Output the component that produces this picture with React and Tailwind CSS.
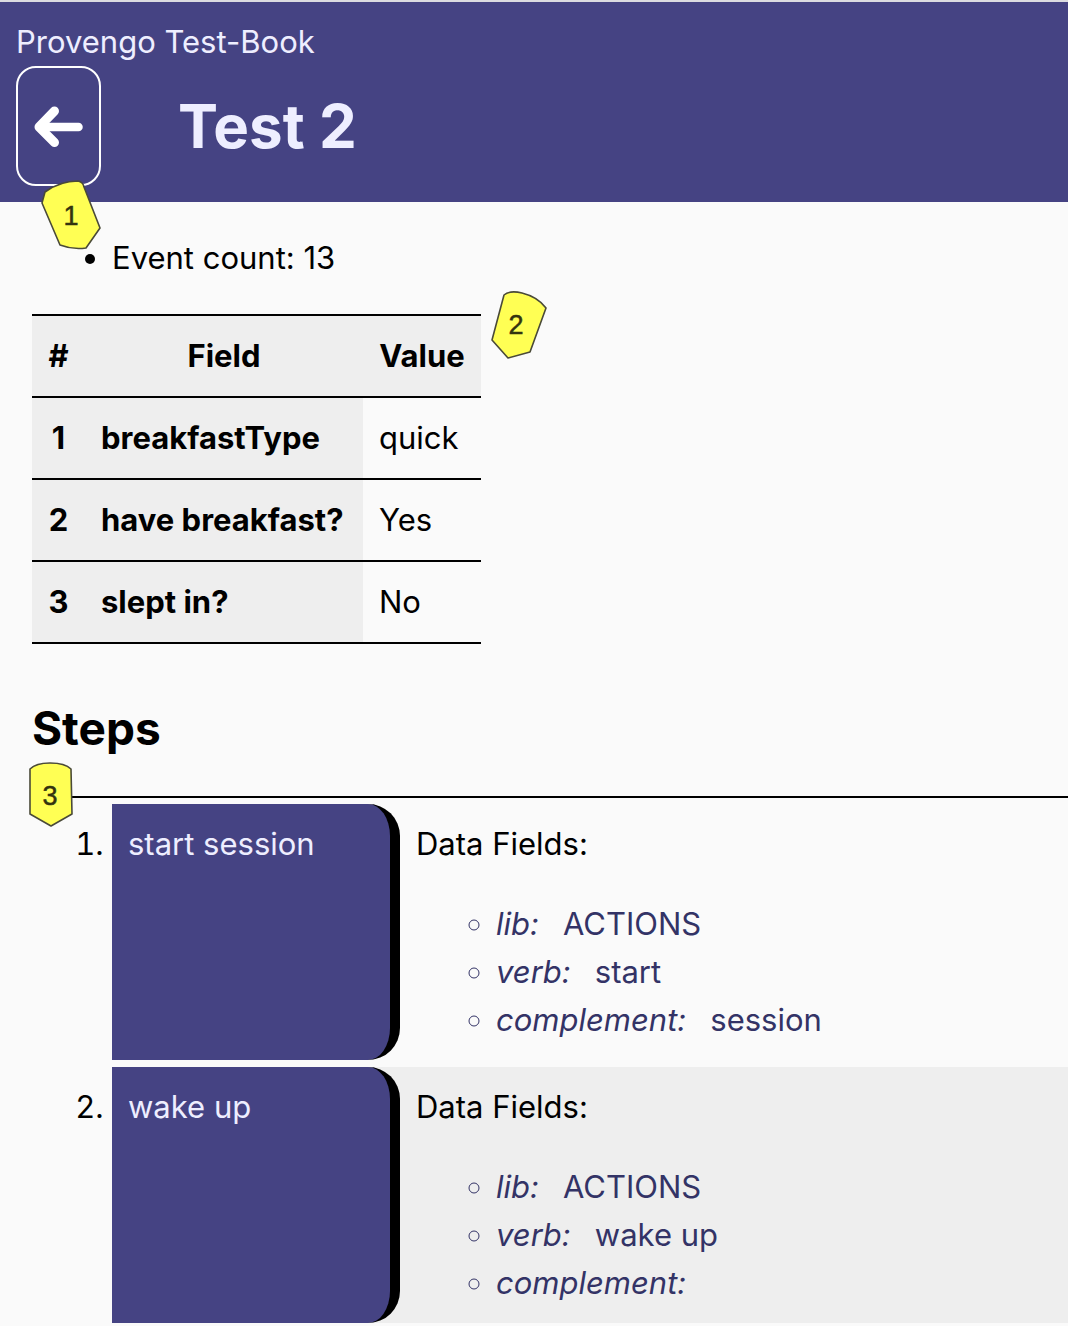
import React from "react";

const fields = [
  { name: "breakfastType", value: "quick" },
  { name: "have breakfast?", value: "Yes" },
  { name: "slept in?", value: "No" },
];

const steps = [
  { title: "start session", data: [["lib", "ACTIONS"], ["verb", "start"], ["complement", "session"]] },
  { title: "wake up", data: [["lib", "ACTIONS"], ["verb", "wake up"], ["complement", ""]] },
];

function Callout({ label, path, x, y, width, height, className }) {
  return (
    <svg
      className={`absolute ${className}`}
      width={width}
      height={height}
      viewBox={`0 0 ${width} ${height}`}
      aria-label={`Callout ${label}`}
    >
      <path d={path} fill="#ffff54" stroke="#4a4a38" strokeWidth="1.6" strokeLinejoin="round" />
      <text
        x={x}
        y={y}
        textAnchor="middle"
        fill="#33330f"
        stroke="#33330f"
        strokeWidth="0.5"
        className="font-['Liberation_Sans',sans-serif] text-[27px]"
      >
        {label}
      </text>
    </svg>
  );
}

function Step({ title, data, shaded }) {
  return (
    <li>
      <div className={`flex ${shaded ? "bg-[#eeeeee]" : ""}`}>
        <div className="w-72 shrink-0 rounded-r-[32px] border-r-10 border-black bg-[#454383] p-4 text-[#eeeeff]">
          {title}
        </div>
        <div className="min-w-0 grow p-4">
          <p>Data Fields:</p>
          <ul className="mt-8 list-[circle] pl-20 text-[#333366]">
            {data.map(([key, value]) => (
              <li key={key}>
                <em className="mr-6">{key}:</em>
                {value}
              </li>
            ))}
          </ul>
        </div>
      </div>
    </li>
  );
}

export default function App() {
  return (
    <div className="min-h-screen overflow-x-hidden bg-[#fafafa] font-[Inter,sans-serif] text-[31px] leading-[48px] text-black">
      <header className="relative border-t-2 border-[#dcdce0] bg-[#454383] p-4 text-[#eeeeff]">
        <p>Provengo Test-Book</p>
        <div className="flex items-center">
          <button
            type="button"
            aria-label="Back"
            className="flex h-[120px] w-[85px] shrink-0 items-center justify-center rounded-[20px] border-2 border-white"
          >
            <svg width="50" height="42" viewBox="0 0 50 42" fill="none" stroke="white" strokeLinecap="round" strokeLinejoin="round" aria-hidden="true">
              <path d="M6 22H44.5" strokeWidth="8.5" />
              <path d="M20.5 6L5 22L20.5 37.5" strokeWidth="9" />
            </svg>
          </button>
          <h1 className="ml-[77px] text-[60px] leading-[96px] font-bold">Test 2</h1>
        </div>
        <Callout
          label="1"
          className="top-[177px] left-10"
          width={64}
          height={74}
          x={31}
          y={46}
          path="M5 13Q20 2 38 2Q43 3 44 8L60 49L46 69Q33 71 20 66L2 24Z"
        />
      </header>

      <main className="pt-8 pl-8">
        <ul className="list-disc pl-20">
          <li>Event count: 13</li>
        </ul>

        <div className="relative mt-8 w-fit">
          <table className="border-collapse">
            <thead>
              <tr className="border-y-2 border-black bg-[#eeeeee]">
                <th scope="col" className="min-w-[53px] px-4 py-4">#</th>
                <th scope="col" className="min-w-[278px] px-4 py-4">Field</th>
                <th scope="col" className="min-w-[118px] px-4 py-4">Value</th>
              </tr>
            </thead>
            <tbody>
              {fields.map((field, i) => (
                <tr key={field.name} className="border-b-2 border-black">
                  <th scope="row" className="bg-[#eeeeee] px-4 py-4">{i + 1}</th>
                  <th className="bg-[#eeeeee] px-4 py-4 text-left">{field.name}</th>
                  <td className="px-4 py-4">{field.value}</td>
                </tr>
              ))}
            </tbody>
          </table>
          <Callout
            label="2"
            className="-top-6 left-[456px]"
            width={60}
            height={72}
            x={28}
            y={44}
            path="M16 5Q22 0 34 3Q50 7 58 18L42 62L20 68L4 50Z"
          />
        </div>

        <section>
          <div className="relative mt-12 border-b-2 border-black pb-8">
            <h2 className="text-[46px] leading-[72px] font-bold">Steps</h2>
            <Callout
              label="3"
              className="-bottom-8 -left-1"
              width={46}
              height={68}
              x={22}
              y={45}
              path="M2 9Q8 3 22 3Q37 3 43 9L44 54L23 66L2 54Z"
            />
          </div>
          <ol className="mt-1.5 flex list-decimal flex-col gap-[7px] pl-20">
            {steps.map((step, i) => (
              <Step key={step.title} title={step.title} data={step.data} shaded={i % 2 === 1} />
            ))}
          </ol>
        </section>
      </main>
    </div>
  );
}
